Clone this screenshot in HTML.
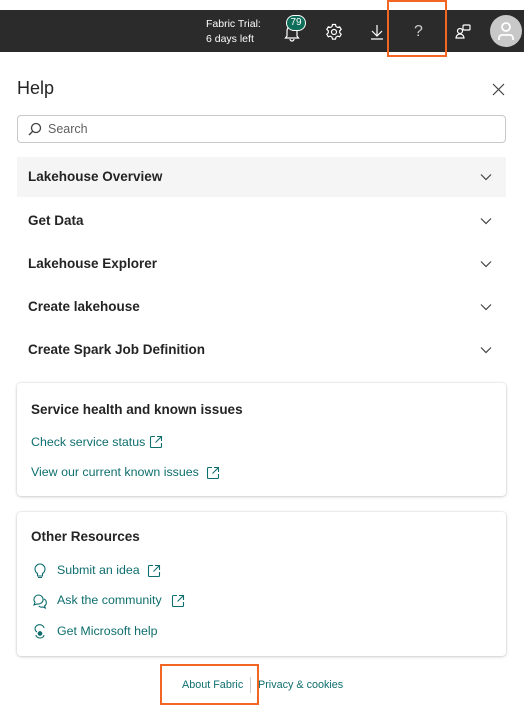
<!DOCTYPE html>
<html><head><style>
*{box-sizing:border-box;margin:0;padding:0}
body{width:524px;height:705px;background:#fff;font-family:"Liberation Sans",sans-serif;position:relative;overflow:hidden;color:#242424}
.bar{position:absolute;left:0;top:10px;width:524px;height:42px;background:#2b2b2b}
.ab{position:absolute}
.trial{left:206px;top:17px;color:#fff;font-size:10.5px;line-height:15px}
h1{position:absolute;left:17px;top:78px;font-size:18px;font-weight:normal;color:#242424}
.search{position:absolute;left:17px;top:115px;width:489px;height:28px;border:1px solid #c8c8c8;border-radius:4px;font-size:12.5px;color:#616161;padding:6px 0 0 30px}
.row{position:absolute;left:17px;width:489px;height:40px;font-size:13.5px;font-weight:bold;padding:12px 11px;color:#242424}
.row svg{position:absolute;right:14px;top:16px}
.card{position:absolute;left:17px;width:489px;background:#fff;border-radius:4px;box-shadow:0 0 2px rgba(0,0,0,.15),0 1px 3px rgba(0,0,0,.15)}
.card h2{position:absolute;left:14px;font-size:13.5px;font-weight:bold;color:#242424}
.lk{position:absolute;font-size:12.4px;color:#0f6e6e}
.foot{position:absolute;top:679px;font-size:10.8px;color:#0f6e6e}
.ob{position:absolute;border:2px solid #f26522}
</style></head><body>
<div class="bar"></div>
<div class="ab trial">Fabric Trial:<br>6 days left</div>
<svg class="ab" style="left:282px;top:22px" width="20" height="20" viewBox="0 0 20 20" fill="none" stroke="#fff" stroke-width="1.2"><path d="M5 14V9a5 5 0 0110 0v5l1.5 2h-13z"/><path d="M8 17a2 2 0 004 0"/></svg>
<div class="ab" style="left:286px;top:15px;width:20px;height:16px;border-radius:8px;background:#0f6e5a;border:1px solid #fff;color:#fff;font-size:10px;text-align:center;line-height:14px">79</div>
<svg class="ab" style="left:325px;top:23px" width="18" height="18" viewBox="0 0 18 18" fill="none" stroke="#fff" stroke-width="1.2"><circle cx="9" cy="9" r="2.5"/><path d="M7.5 1.5h3l.5 2 1.7 1 2-.7 1.5 2.6-1.5 1.4v2l1.5 1.4-1.5 2.6-2-.7-1.7 1-.5 2h-3l-.5-2-1.7-1-2 .7-1.5-2.6 1.5-1.4v-2L1.8 6.4l1.5-2.6 2 .7 1.7-1z"/></svg>
<svg class="ab" style="left:369px;top:23px" width="16" height="18" viewBox="0 0 16 18" fill="none" stroke="#fff" stroke-width="1.2"><path d="M8 2v11M3 8l5 5 5-5M2 16h12"/></svg>
<div class="ab" style="left:414px;top:23px;color:#ccc;font-size:16px">?</div>
<svg class="ab" style="left:454px;top:23px" width="18" height="18" viewBox="0 0 18 18" fill="none" stroke="#fff" stroke-width="1.2"><rect x="9" y="2" width="7" height="5" rx="1"/><circle cx="6" cy="8" r="2.5"/><path d="M2 15a4 4 0 018 0z"/></svg>
<div class="ab" style="left:490px;top:15px;width:32px;height:32px;border-radius:50%;background:#c8c8c8"></div>
<svg class="ab" style="left:496px;top:20px" width="20" height="22" viewBox="0 0 20 22" fill="none" stroke="#fff" stroke-width="1.8"><circle cx="10" cy="7" r="4"/><path d="M3 20v-2a3 3 0 013-3h8a3 3 0 013 3v2"/></svg>
<div class="ob" style="left:387px;top:0;width:60px;height:57px"></div>

<h1>Help</h1>
<svg class="ab" style="left:492px;top:83px" width="13" height="13" viewBox="0 0 13 13" stroke="#424242" stroke-width="1.2"><path d="M1 1l11 11M12 1L1 12"/></svg>
<div class="search">Search</div>
<svg class="ab" style="left:28px;top:122px" width="14" height="14" viewBox="0 0 14 14" fill="none" stroke="#424242" stroke-width="1.3"><circle cx="8" cy="6" r="4.5"/><path d="M5 9l-4 4"/></svg>

<div class="row" style="top:157px;background:#f5f5f5">Lakehouse Overview<svg width="12" height="8" viewBox="0 0 12 8" fill="none" stroke="#424242" stroke-width="1.2"><path d="M1 1.5l5 5 5-5"/></svg></div>
<div class="row" style="top:201px">Get Data<svg width="12" height="8" viewBox="0 0 12 8" fill="none" stroke="#424242" stroke-width="1.2"><path d="M1 1.5l5 5 5-5"/></svg></div>
<div class="row" style="top:244px">Lakehouse Explorer<svg width="12" height="8" viewBox="0 0 12 8" fill="none" stroke="#424242" stroke-width="1.2"><path d="M1 1.5l5 5 5-5"/></svg></div>
<div class="row" style="top:287px">Create lakehouse<svg width="12" height="8" viewBox="0 0 12 8" fill="none" stroke="#424242" stroke-width="1.2"><path d="M1 1.5l5 5 5-5"/></svg></div>
<div class="row" style="top:330px">Create Spark Job Definition<svg width="12" height="8" viewBox="0 0 12 8" fill="none" stroke="#424242" stroke-width="1.2"><path d="M1 1.5l5 5 5-5"/></svg></div>

<div class="card" style="top:383px;height:113px"><h2 style="top:19px">Service health and known issues</h2></div>
<div class="lk" style="left:31px;top:435px">Check service status</div>
<div class="lk" style="left:31px;top:465px">View our current known issues</div>
<svg class="ab" style="left:149px;top:435px" width="14" height="14" viewBox="0 0 14 14" fill="none" stroke="#0f6e6e" stroke-width="1.1"><path d="M6 1.5H2.5a1 1 0 00-1 1v9a1 1 0 001 1h9a1 1 0 001-1V8M8 1.5h4.5V6M12.5 1.5L6.5 7.5"/></svg>
<svg class="ab" style="left:206px;top:466px" width="14" height="14" viewBox="0 0 14 14" fill="none" stroke="#0f6e6e" stroke-width="1.1"><path d="M6 1.5H2.5a1 1 0 00-1 1v9a1 1 0 001 1h9a1 1 0 001-1V8M8 1.5h4.5V6M12.5 1.5L6.5 7.5"/></svg>

<div class="card" style="top:512px;height:144px"><h2 style="top:17px">Other Resources</h2></div>
<svg class="ab" style="left:33px;top:563px" width="14" height="16" viewBox="0 0 14 16" fill="none" stroke="#0f6e6e" stroke-width="1.1"><path d="M4.5 10.5C3 9.5 2 8 2 6a5 5 0 0110 0c0 2-1 3.5-2.5 4.5v2.5h-5z M5 14.5h4"/></svg>
<div class="lk" style="left:57px;top:563px">Submit an idea</div>
<svg class="ab" style="left:147px;top:564px" width="14" height="14" viewBox="0 0 14 14" fill="none" stroke="#0f6e6e" stroke-width="1.1"><path d="M6 1.5H2.5a1 1 0 00-1 1v9a1 1 0 001 1h9a1 1 0 001-1V8M8 1.5h4.5V6M12.5 1.5L6.5 7.5"/></svg>
<svg class="ab" style="left:32px;top:593px" width="16" height="16" viewBox="0 0 16 16" fill="none" stroke="#0f6e6e" stroke-width="1.1"><path d="M7 2a5 4.5 0 00-4 7.2L2 12l3-1a5 4.5 0 102-9z"/><path d="M12 6a4 4 0 01.5 7l.8 2-2.5-1a4 4 0 01-4-1"/></svg>
<div class="lk" style="left:57px;top:593px">Ask the community</div>
<svg class="ab" style="left:171px;top:594px" width="14" height="14" viewBox="0 0 14 14" fill="none" stroke="#0f6e6e" stroke-width="1.1"><path d="M6 1.5H2.5a1 1 0 00-1 1v9a1 1 0 001 1h9a1 1 0 001-1V8M8 1.5h4.5V6M12.5 1.5L6.5 7.5"/></svg>
<svg class="ab" style="left:33px;top:624px" width="14" height="16" viewBox="0 0 14 16" fill="none" stroke="#0f6e6e" stroke-width="1.1"><path d="M11 4a4.5 4 0 10-7 4M3 11a4 3 0 008 0"/><circle cx="7" cy="9.5" r="1.8" fill="#0f6e6e"/></svg>
<div class="lk" style="left:57px;top:624px">Get Microsoft help</div>

<div class="foot" style="left:182px">About Fabric</div>
<div class="ab" style="left:250px;top:677px;width:1px;height:16px;background:#ccc"></div>
<div class="foot" style="left:258px">Privacy &amp; cookies</div>
<div class="ob" style="left:160px;top:664px;width:99px;height:41px"></div>
</body></html>
